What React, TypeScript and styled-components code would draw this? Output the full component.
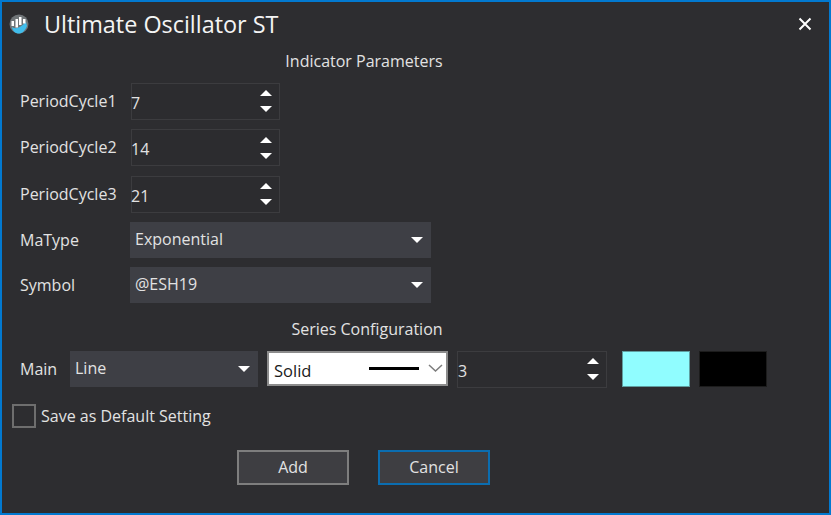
import React, { FC } from "react";
import styled, { createGlobalStyle } from "styled-components";

const GlobalStyle = createGlobalStyle`
  html, body {
    margin: 0;
    padding: 0;
    background: #2d2d30;
  }
`;

const fontStack = `"Open Sans", "Noto Sans", "Liberation Sans", sans-serif`;

const periods = [
  { label: "PeriodCycle1", value: "7" },
  { label: "PeriodCycle2", value: "14" },
  { label: "PeriodCycle3", value: "21" },
];

const choices = [
  { label: "MaType", value: "Exponential" },
  { label: "Symbol", value: "@ESH19" },
];

const Logo: FC = () => (
  <svg width="20" height="20" viewBox="0 0 20 20">
    <defs>
      <filter id="soft">
        <feGaussianBlur stdDeviation="0.5" />
      </filter>
    </defs>
    <g filter="url(#soft)">
      <circle cx="10" cy="10" r="9.5" fill="#6f7478" />
      <path d="M3 13 C7 16 12 13 17 8 L18 12 C16 17 13 19.5 10 19.5 C6 19.5 3.5 17 3 13 Z" fill="#3fbdec" />
      <path d="M2.5 7h2.5v5H2.5zM6.5 5h2.5v8.5H6.5zM10 3h2.5v8H10zM14 5h2.5v4.5H14z" fill="#ffffff" />
    </g>
  </svg>
);

const CloseIcon: FC = () => (
  <svg width="14" height="14" viewBox="0 0 14 14">
    <path d="M1.5 1.5 L12.5 12.5 M12.5 1.5 L1.5 12.5" stroke="#ffffff" strokeWidth="2" fill="none" />
  </svg>
);

const Spinner: FC<{ value: string; wide?: boolean }> = ({ value, wide }) => (
  <SpinnerBox $wide={wide}>
    <SpinnerValue $wide={wide}>{value}</SpinnerValue>
    <SpinnerArrows>
      <Arrow $up />
      <Arrow />
    </SpinnerArrows>
  </SpinnerBox>
);

const Select: FC<{ value: string; width: number }> = ({ value, width }) => (
  <SelectBox $width={width}>
    <SelectValue>{value}</SelectValue>
    <Arrow />
  </SelectBox>
);

const App: FC = () => {
  return (
    <Root>
      <GlobalStyle />
      <TitleBar>
        <TitleLeft>
          <Logo />
          <Title>Ultimate Oscillator ST</Title>
        </TitleLeft>
        <CloseButton>
          <CloseIcon />
        </CloseButton>
      </TitleBar>

      <Body>
        <Heading>Indicator Parameters</Heading>
        <Rows>
          {periods.map((p) => (
            <Row key={p.label}>
              <SpinnerLabel>{p.label}</SpinnerLabel>
              <Spinner value={p.value} />
            </Row>
          ))}
        </Rows>
        <ChoiceRows>
          {choices.map((c) => (
            <Row key={c.label}>
              <RowLabel>{c.label}</RowLabel>
              <Select value={c.value} width={301} />
            </Row>
          ))}
        </ChoiceRows>

        <SeriesHeading>Series Configuration</SeriesHeading>
        <SeriesRow>
          <SeriesLabel>Main</SeriesLabel>
          <Select value="Line" width={188} />
          <LineStyle>
            <LineStyleText>Solid</LineStyleText>
            <LineSample />
            <svg width="15" height="8" viewBox="0 0 15 8">
              <path d="M1 1 L7.5 7 L14 1" stroke="#7d7d7d" strokeWidth="1.5" fill="none" />
            </svg>
          </LineStyle>
          <Spinner value="3" wide />
          <Swatch $color="#90fdff" $edge="#5f9ea0" $gap={15} />
          <Swatch $color="#000000" $edge="#1c1c1c" $gap={9} />
        </SeriesRow>

        <CheckRow>
          <CheckBox />
          <CheckLabel>Save as Default Setting</CheckLabel>
        </CheckRow>

        <Buttons>
          <Button>Add</Button>
          <Button $focused>Cancel</Button>
        </Buttons>
      </Body>
    </Root>
  );
};

export default App;

const Root = styled.div`
  box-sizing: border-box;
  width: 831px;
  height: 515px;
  overflow: hidden;
  display: flex;
  flex-direction: column;
  background: #2d2d30;
  border: 2px solid #0279d0;
  color: #e2e2e2;
  font-family: ${fontStack};
  font-size: 16px;
`;

const TitleBar = styled.div`
  display: flex;
  align-items: center;
  justify-content: space-between;
  height: 44px;
  padding: 0 17px 0 7px;
  flex-shrink: 0;
`;

const TitleLeft = styled.div`
  display: flex;
  align-items: center;
  gap: 15px;
`;

const Title = styled.div`
  font-size: 23.4px;
  color: #f4f4f4;
`;

const CloseButton = styled.div`
  display: flex;
  align-items: center;
`;

const Body = styled.div`
  display: flex;
  flex-direction: column;
  padding: 5px 0 0 10px;
`;

const Heading = styled.div`
  height: 20px;
  line-height: 20px;
  text-align: center;
  margin-right: 113px;
`;

const SeriesHeading = styled(Heading)`
  margin-top: 16px;
  margin-right: 107px;
`;

const Rows = styled.div`
  display: flex;
  flex-direction: column;
  gap: 9.5px;
  margin: 11.9px 0 0 8px;
`;

const ChoiceRows = styled.div`
  display: flex;
  flex-direction: column;
  gap: 9px;
  margin: 9.1px 0 0 8px;
`;

const Row = styled.div`
  display: flex;
  align-items: center;
`;

const RowLabel = styled.div`
  width: 110px;
  flex-shrink: 0;
  white-space: nowrap;
`;

const SpinnerLabel = styled(RowLabel)`
  padding-bottom: 1px;
`;

const SpinnerBox = styled.div<{ $wide?: boolean }>`
  box-sizing: border-box;
  display: flex;
  align-items: center;
  justify-content: space-between;
  width: ${(p) => (p.$wide ? 150 : 149)}px;
  height: 37px;
  margin-left: ${(p) => (p.$wide ? 0 : 1)}px;
  border: 1px solid #3c3c3f;
  padding: 0 7px 0 0;
  background: #2c2c2f;
`;

const SpinnerValue = styled.div<{ $wide?: boolean }>`
  padding-top: 3px;
  margin-left: ${(p) => (p.$wide ? 0 : -1)}px;
`;

const SpinnerArrows = styled.div`
  display: flex;
  flex-direction: column;
  gap: 10px;
`;

const Arrow = styled.span<{ $up?: boolean }>`
  display: block;
  width: 0;
  height: 0;
  border-left: 6px solid transparent;
  border-right: 6px solid transparent;
  ${(p) => (p.$up ? "border-bottom: 6px solid #ffffff;" : "border-top: 6px solid #ffffff;")}
`;

const SelectBox = styled.div<{ $width: number }>`
  box-sizing: border-box;
  display: flex;
  align-items: center;
  justify-content: space-between;
  width: ${(p) => p.$width}px;
  height: 36px;
  padding: 0 8px 0 5px;
  background: #3e3f45;
`;

const SelectValue = styled.div`
  margin-top: -2px;
`;

const SeriesRow = styled.div`
  display: flex;
  align-items: flex-start;
  gap: 9px;
  margin: 12px 0 0 8px;
`;

const SeriesLabel = styled.div`
  width: 41px;
  height: 36px;
  line-height: 36px;
`;

const LineStyle = styled.div`
  box-sizing: border-box;
  display: flex;
  align-items: center;
  width: 181px;
  height: 35px;
  padding: 0 2px 0 5px;
  background: #ffffff;
  border: 2px solid #8c8c8c;
`;

const LineStyleText = styled.div`
  width: 95px;
  padding-top: 4px;
  font-size: 16.5px;
  color: #1a1a1a;
`;

const LineSample = styled.div`
  width: 50px;
  height: 3px;
  background: #000000;
  margin-right: 9px;
`;

const Swatch = styled.div<{ $color: string; $edge: string; $gap: number }>`
  box-sizing: border-box;
  width: 68px;
  height: 36px;
  background: ${(p) => p.$color};
  border: 1px solid ${(p) => p.$edge};
  margin-left: ${(p) => p.$gap - 9}px;
`;

const CheckRow = styled.div`
  display: flex;
  align-items: center;
  gap: 5px;
  margin-top: 16px;
`;

const CheckBox = styled.div`
  box-sizing: border-box;
  width: 24px;
  height: 24px;
  border: 2px solid #6e6e6e;
`;

const CheckLabel = styled.div``;

const Buttons = styled.div`
  display: flex;
  gap: 29px;
  margin: 22px 0 0 225px;
`;

const Button = styled.div<{ $focused?: boolean }>`
  box-sizing: border-box;
  width: 112px;
  height: 35px;
  line-height: 31px;
  text-align: center;
  background: #3e3e42;
  border: 2px solid ${(p) => (p.$focused ? "#0b6db0" : "#7e7e7e")};
`;
